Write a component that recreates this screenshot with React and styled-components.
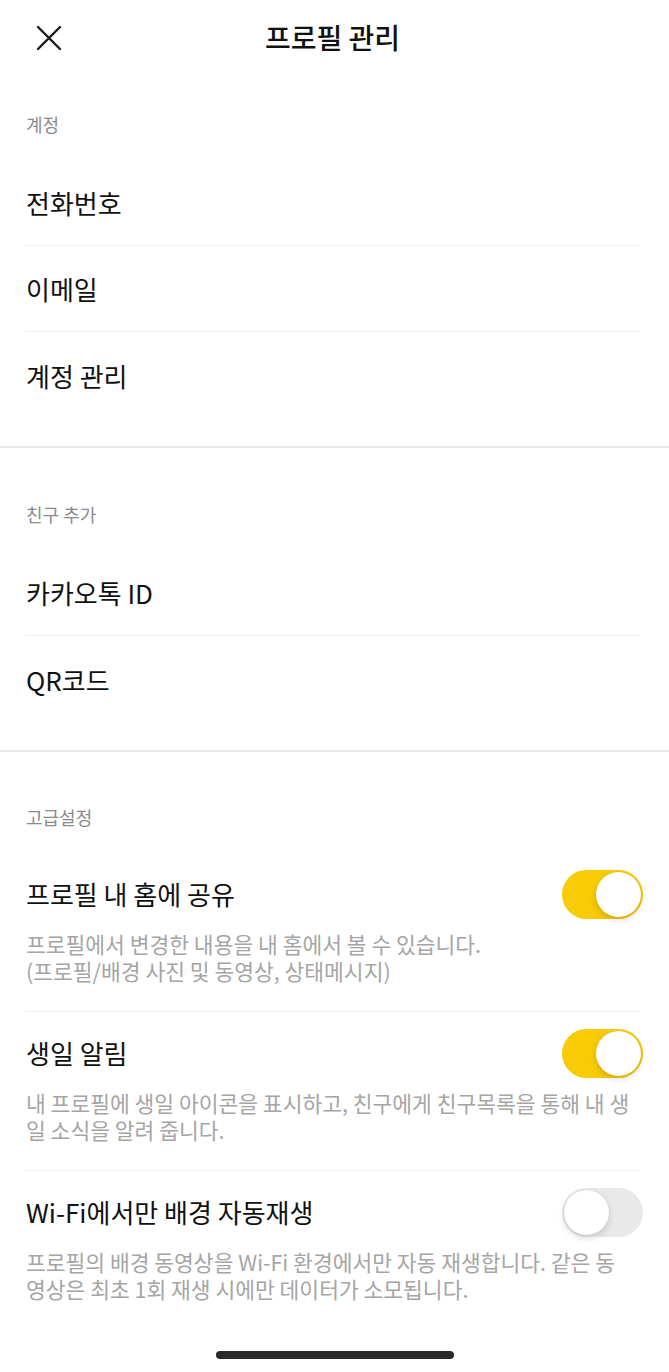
import React from 'react'
import styled, { createGlobalStyle } from 'styled-components'

const GlobalStyle = createGlobalStyle`
    * {
        box-sizing: border-box;
    }
    body {
        margin: 0;
        background: #ffffff;
        font-family: "Noto Sans CJK KR", "Noto Sans", sans-serif;
        color: #111111;
    }
`

const sections = [
    { title: '계정', items: ['전화번호', '이메일', '계정 관리'] },
    { title: '친구 추가', items: ['카카오톡 ID', 'QR코드'] },
]

// line breaks follow the app's own wrapping
const toggles = [
    {
        title: '프로필 내 홈에 공유',
        desc: '프로필에서 변경한 내용을 내 홈에서 볼 수 있습니다.\n(프로필/배경 사진 및 동영상, 상태메시지)',
        on: true,
    },
    {
        title: '생일 알림',
        desc: '내 프로필에 생일 아이콘을 표시하고, 친구에게 친구목록을 통해 내 생\n일 소식을 알려 줍니다.',
        on: true,
    },
    {
        title: 'Wi-Fi에서만 배경 자동재생',
        desc: '프로필의 배경 동영상을 Wi-Fi 환경에서만 자동 재생합니다. 같은 동\n영상은 최초 1회 재생 시에만 데이터가 소모됩니다.',
        on: false,
    },
]

function CloseIcon() {
    return (
        <svg width="26" height="26" viewBox="0 0 26 26" fill="none">
            <path d="M2 2 L24 24 M24 2 L2 24" stroke="#1a1a1a" strokeWidth="2.4" strokeLinecap="round" />
        </svg>
    )
}

function App() {
    return (
        <Page>
            <GlobalStyle />
            <Header>
                <CloseButton>
                    <CloseIcon />
                </CloseButton>
                <Title>프로필 관리</Title>
            </Header>

            {sections.map((section, i) => (
                <Section key={section.title} $top={i === 0 ? 36 : 54}>
                    <Label>{section.title}</Label>
                    {section.items.map((item) => (
                        <Row key={item}>{item}</Row>
                    ))}
                </Section>
            ))}

            <Section $top={53} $last>
                <Label>고급설정</Label>
                {toggles.map((t) => (
                    <ToggleItem key={t.title}>
                        <TitleRow>
                            <ItemTitle>{t.title}</ItemTitle>
                            <Switch $on={t.on}>
                                <Knob />
                            </Switch>
                        </TitleRow>
                        <Desc>{t.desc}</Desc>
                    </ToggleItem>
                ))}
            </Section>

            <Footer>
                <HomeBar />
            </Footer>
        </Page>
    )
}

const Page = styled.div`
    width: 669px;
    min-height: 100vh;
    display: flex;
    flex-direction: column;
`

const Header = styled.header`
    height: 76px;
    display: flex;
    align-items: center;
    justify-content: center;
    position: relative;
`

const CloseButton = styled.button`
    position: absolute;
    left: 36px;
    top: 25px;
    width: 26px;
    height: 26px;
    padding: 0;
    border: none;
    background: none;
    display: flex;
`

const Title = styled.h1`
    margin: -3px 0 0 -4px;
    font-size: 28px;
    font-weight: 500;
    line-height: 32px;
    color: #111111;
`

const Section = styled.section`
    padding-top: ${(p) => p.$top}px;
    padding-bottom: ${(p) => (p.$last ? 0 : 28)}px;
    border-bottom: ${(p) => (p.$last ? 'none' : '2px solid #e9e9e9')};
`

const Label = styled.div`
    margin: 0 25px 24px 26px;
    font-size: 18px;
    line-height: 24px;
    color: #8a8a8a;
`

const Row = styled.div`
    margin: 0 29px 0 25px;
    height: 86px;
    display: flex;
    align-items: center;
    padding-left: 1px;
    font-size: 26px;
    color: #111111;
    border-bottom: 1px solid #f0f0f0;
    &:last-child {
        border-bottom: none;
    }
`

const ToggleItem = styled.div`
    margin: 0 29px 0 25px;
    padding: 26px 0 27px 1px;
    border-bottom: 1px solid #f0f0f0;
    &:last-child {
        border-bottom: none;
    }
`

const TitleRow = styled.div`
    height: 30px;
    display: flex;
    align-items: center;
    justify-content: space-between;
`

const ItemTitle = styled.div`
    font-size: 26px;
    line-height: 30px;
    color: #111111;
`

const Switch = styled.div`
    flex-shrink: 0;
    width: 81px;
    height: 49px;
    margin-right: -3px;
    border-radius: 25px;
    background: ${(p) => (p.$on ? '#f8cb05' : '#e9e9ea')};
    display: flex;
    align-items: center;
    justify-content: ${(p) => (p.$on ? 'flex-end' : 'flex-start')};
    padding: 0 2px;
`

const Knob = styled.div`
    width: 45px;
    height: 45px;
    border-radius: 50%;
    background: #ffffff;
    box-shadow: 0 3px 7px rgba(0, 0, 0, 0.15), 0 0 0 0.5px rgba(0, 0, 0, 0.04);
`

const Desc = styled.p`
    margin: 22px 0 0;
    font-size: 21.5px;
    line-height: 26.5px;
    color: #a5a5a5;
    white-space: pre-line;
`

const Footer = styled.div`
    margin-top: auto;
    display: flex;
    justify-content: center;
    padding-bottom: 13px;
`

const HomeBar = styled.div`
    width: 238px;
    height: 8px;
    border-radius: 4px;
    background: #2a2a2a;
`

export default App
